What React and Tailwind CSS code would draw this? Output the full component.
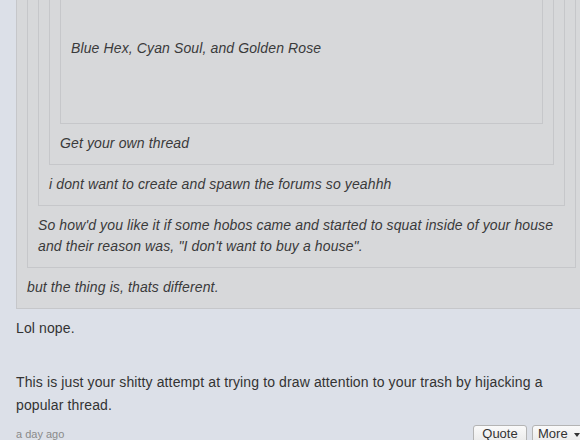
function Quote({ children, text }) {
  return (
    <div className="border border-[#c6c7ca] bg-[#d7d8da] px-[10px] pt-[10px] pb-[10px]">
      {children}
      {text && <div className="mt-[9px]">{text}</div>}
    </div>
  );
}

export default function App() {
  return (
    <div className="h-[440px] w-[580px] overflow-hidden bg-[#dce0e8] font-['Liberation_Sans',Arial,sans-serif] text-[#333]">
      <div className="-mt-[73px] w-[587px] pl-[16px]">
        {/* nested quotes */}
        <div className="w-[571px] text-[14px] italic leading-[21px] tracking-[0.12px] text-[#3a3a3a]">
          <Quote text="but the thing is, thats different.">
            <Quote
              text={
                <>
                  So how'd you like it if some hobos came and started to squat inside of your house
                  <br />
                  and their reason was, "I don't want to buy a house".
                </>
              }
            >
              <Quote text="i dont want to create and spawn the forums so yeahhh">
                <Quote text="Get your own thread">
                  <div className="border border-[#c6c7ca] bg-[#d7d8da] p-[10px]">
                    <div>Featuring</div>
                    <div className="mt-[35px]">Blue Hex, Cyan Soul, and Golden Rose</div>
                    <div className="h-[54px]" />
                  </div>
                </Quote>
              </Quote>
            </Quote>
          </Quote>
        </div>

        {/* post body */}
        <div className="mt-[8px] text-[14px] leading-[23px] tracking-[0.12px] text-[#333]">
          <p>Lol nope.</p>
          <p className="mt-[31px] w-[545px]">
            This is just your shitty attempt at trying to draw attention to your trash by hijacking a popular thread.
          </p>
        </div>

        {/* footer */}
        <div className="mt-[4px] flex items-start justify-between">
          <span className="mt-[5px] text-[11px] leading-[16px] text-[#8a8a8a]">a day ago</span>
          <div className="mt-[4px] flex gap-[5px]">
            <button className="flex h-[24px] w-[54px] items-start justify-center rounded-[3px] border border-[#b4b4b4] bg-gradient-to-b from-[#fafafa] to-[#e4e4e4] text-[13px] leading-[16px] text-[#333]">
              Quote
            </button>
            <button className="flex h-[24px] w-[55px] items-start rounded-[3px] border border-[#b4b4b4] bg-gradient-to-b from-[#fafafa] to-[#e4e4e4] pl-[5px] text-[13px] leading-[16px] text-[#333]">
              More
              <span className="ml-[6px] mt-[7px] h-0 w-0 border-x-[3px] border-t-[4px] border-x-transparent border-t-[#333]" />
            </button>
          </div>
        </div>
      </div>
    </div>
  );
}
